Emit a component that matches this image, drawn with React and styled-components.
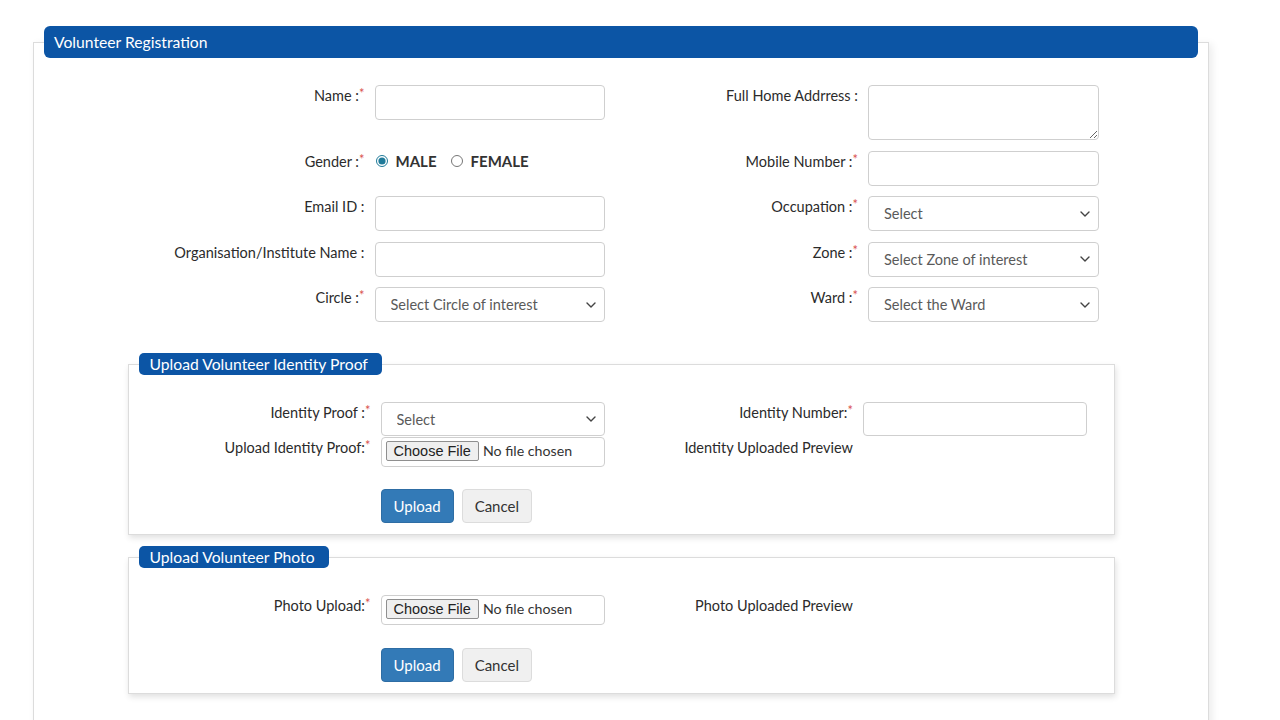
import React from "react";
import styled, { createGlobalStyle } from "styled-components";

const GlobalStyle = createGlobalStyle`
  body {
    margin: 0;
    background: #fff;
    font-family: Lato, "Liberation Sans", sans-serif;
    color: #333;
  }
  * { box-sizing: border-box; }
`;

const chevron =
  "url(\"data:image/svg+xml;utf8,<svg xmlns='http://www.w3.org/2000/svg' width='10' height='6' viewBox='0 0 10 6'><path d='M1 1l4 4 4-4' fill='none' stroke='%23444' stroke-width='1.4' stroke-linecap='round' stroke-linejoin='round'/></svg>\")";

const Panel = styled.fieldset`
  margin: 26px 0 0 33px;
  width: 1176px;
  min-width: 0;
  border: 1px solid #dcdcdc;
  padding: 0 10px 40px;
  box-shadow: 3px 2px 8px rgba(0, 0, 0, 0.08);
`;

const Header = styled.legend`
  width: 100%;
  height: 32px;
  line-height: 32px;
  padding: 0 10px;
  background: #0c55a5;
  color: #fff;
  font-size: 15.7px;
  border-radius: 6px;
`;

const Wrapper = styled.div`
  width: 987px;
  margin: 0 auto;
  padding-top: 27px;
`;

const FormGrid = styled.div`
  display: grid;
  grid-template-columns: 1fr 1fr;
  row-gap: ${(p) => p.gap || 0}px;
`;

const Field = styled.div`
  display: grid;
  grid-template-columns: ${(p) => p.lw}px ${(p) => p.iw}px;
  column-gap: 10px;
  align-items: start;
`;

const Label = styled.label`
  text-align: right;
  font-size: 14.5px;
  line-height: 20px;
  padding-top: 1px;
  color: #2b2b2b;
  white-space: nowrap;
`;

const Req = styled.span`
  color: #d9534f;
  font-size: 13px;
  vertical-align: top;
  line-height: 14px;
`;

const Input = styled.input`
  width: 100%;
  height: ${(p) => p.h || 35}px;
  border: 1px solid #cfcfcf;
  border-radius: 4px;
  padding: 6px 12px;
  font-family: Lato, "Liberation Sans", sans-serif;
  font-size: 14.5px;
  color: #555;
  background: #fff;
`;

const TextArea = styled.textarea`
  width: 100%;
  height: 55px;
  border: 1px solid #cfcfcf;
  border-radius: 4px;
  padding: 6px 12px;
  font-family: Lato, "Liberation Sans", sans-serif;
  font-size: 14.5px;
  resize: vertical;
  display: block;
`;

const Select = styled.select`
  width: 100%;
  height: ${(p) => p.h || 35}px;
  border: 1px solid #cfcfcf;
  border-radius: 4px;
  padding: 0 28px 0 15px;
  appearance: none;
  font-family: Lato, "Liberation Sans", sans-serif;
  font-size: 14.5px;
  color: #5a5a5a;
  background: #fff ${chevron} no-repeat right 8px center;
`;

const FileInput = styled.input`
  width: 100%;
  height: 30px;
  border: 1px solid #cfcfcf;
  border-radius: 4px;
  padding: 3px 4px;
  font-family: Lato, "Liberation Sans", sans-serif;
  font-size: 14.2px;
  color: #333;
  background: #fff;

  &::file-selector-button {
    font-family: "Liberation Sans", Arial, sans-serif;
    font-size: 14.5px;
    padding: 1px 7px;
    margin-right: 4px;
    border: 1px solid #8f8f8f;
    border-radius: 2px;
    background: #efefef;
    color: #222;
  }
`;

const RadioGroup = styled.div`
  display: flex;
  align-items: center;
  height: 20px;
`;

const RadioLabel = styled.label`
  display: flex;
  align-items: center;
  font-size: 15px;
  font-weight: 700;
  color: #333;
  margin-right: 13px;

  input {
    width: 12px;
    height: 12px;
    margin: 0 8px 0 1px;
    accent-color: #1f7a99;
  }
`;

const SubPanel = styled.fieldset`
  margin: ${(p) => p.mt}px 0 0;
  min-width: 0;
  border: 1px solid #dcdcdc;
  padding: 0 10px 11px;
  box-shadow: 1px 3px 6px rgba(0, 0, 0, 0.12);
`;

const SubLegend = styled.legend`
  height: 22px;
  line-height: 22px;
  padding: 0 14px 0 11px;
  background: #0c55a5;
  color: #fff;
  font-size: 15.7px;
  border-radius: 5px;
`;

const SubBody = styled.div`
  padding-top: 27px;
`;

const Actions = styled.div`
  display: flex;
  gap: 8px;
  padding-left: 242px;
  margin-top: ${(p) => p.mt}px;
`;

const Button = styled.button`
  height: 34px;
  padding: 0 12px;
  border-radius: 4px;
  font-family: Lato, "Liberation Sans", sans-serif;
  font-size: 15px;
  border: 1px solid ${(p) => (p.primary ? "#2e6da4" : "#dcdcdc")};
  background: ${(p) => (p.primary ? "#337ab7" : "#f0f0f0")};
  color: ${(p) => (p.primary ? "#fff" : "#333")};
`;

const Star = () => <Req>*</Req>;

export default function App() {
  return (
    <>
      <GlobalStyle />
      <Panel>
        <Header>Volunteer Registration</Header>
        <Wrapper>
          <FormGrid gap={10.5}>
            <Field lw={237} iw={230}>
              <Label>Name :<Star /></Label>
              <Input type="text" />
            </Field>
            <Field lw={237} iw={231}>
              <Label>Full Home Addrress :</Label>
              <TextArea />
            </Field>

            <Field lw={237} iw={230}>
              <Label>Gender :<Star /></Label>
              <RadioGroup>
                <RadioLabel>
                  <input type="radio" name="gender" defaultChecked />
                  MALE
                </RadioLabel>
                <RadioLabel>
                  <input type="radio" name="gender" />
                  FEMALE
                </RadioLabel>
              </RadioGroup>
            </Field>
            <Field lw={237} iw={231}>
              <Label>Mobile Number :<Star /></Label>
              <Input type="text" />
            </Field>

            <Field lw={237} iw={230}>
              <Label>Email ID :</Label>
              <Input type="text" />
            </Field>
            <Field lw={237} iw={231}>
              <Label>Occupation :<Star /></Label>
              <Select defaultValue="">
                <option value="">Select</option>
              </Select>
            </Field>

            <Field lw={237} iw={230}>
              <Label>Organisation/Institute Name :</Label>
              <Input type="text" />
            </Field>
            <Field lw={237} iw={231}>
              <Label>Zone :<Star /></Label>
              <Select defaultValue="">
                <option value="">Select Zone of interest</option>
              </Select>
            </Field>

            <Field lw={237} iw={230}>
              <Label>Circle :<Star /></Label>
              <Select defaultValue="">
                <option value="">Select Circle of interest</option>
              </Select>
            </Field>
            <Field lw={237} iw={231}>
              <Label>Ward :<Star /></Label>
              <Select defaultValue="">
                <option value="">Select the Ward</option>
              </Select>
            </Field>
          </FormGrid>

          <SubPanel mt={31}>
            <SubLegend>Upload Volunteer Identity Proof</SubLegend>
            <SubBody>
              <FormGrid gap={1}>
                <Field lw={232} iw={224}>
                  <Label>Identity Proof :<Star /></Label>
                  <Select h={34} defaultValue="">
                    <option value="">Select</option>
                  </Select>
                </Field>
                <Field lw={232} iw={224}>
                  <Label>Identity Number:<Star /></Label>
                  <Input type="text" h={34} />
                </Field>
                <Field lw={232} iw={224}>
                  <Label>Upload Identity Proof:<Star /></Label>
                  <FileInput type="file" />
                </Field>
                <Field lw={232} iw={224}>
                  <Label>Identity Uploaded Preview</Label>
                </Field>
              </FormGrid>
              <Actions mt={22}>
                <Button primary>Upload</Button>
                <Button>Cancel</Button>
              </Actions>
            </SubBody>
          </SubPanel>

          <SubPanel mt={11}>
            <SubLegend>Upload Volunteer Photo</SubLegend>
            <SubBody>
              <FormGrid>
                <Field lw={232} iw={224}>
                  <Label>Photo Upload:<Star /></Label>
                  <FileInput type="file" />
                </Field>
                <Field lw={232} iw={224}>
                  <Label>Photo Uploaded Preview</Label>
                </Field>
              </FormGrid>
              <Actions mt={23}>
                <Button primary>Upload</Button>
                <Button>Cancel</Button>
              </Actions>
            </SubBody>
          </SubPanel>
        </Wrapper>
      </Panel>
    </>
  );
}
